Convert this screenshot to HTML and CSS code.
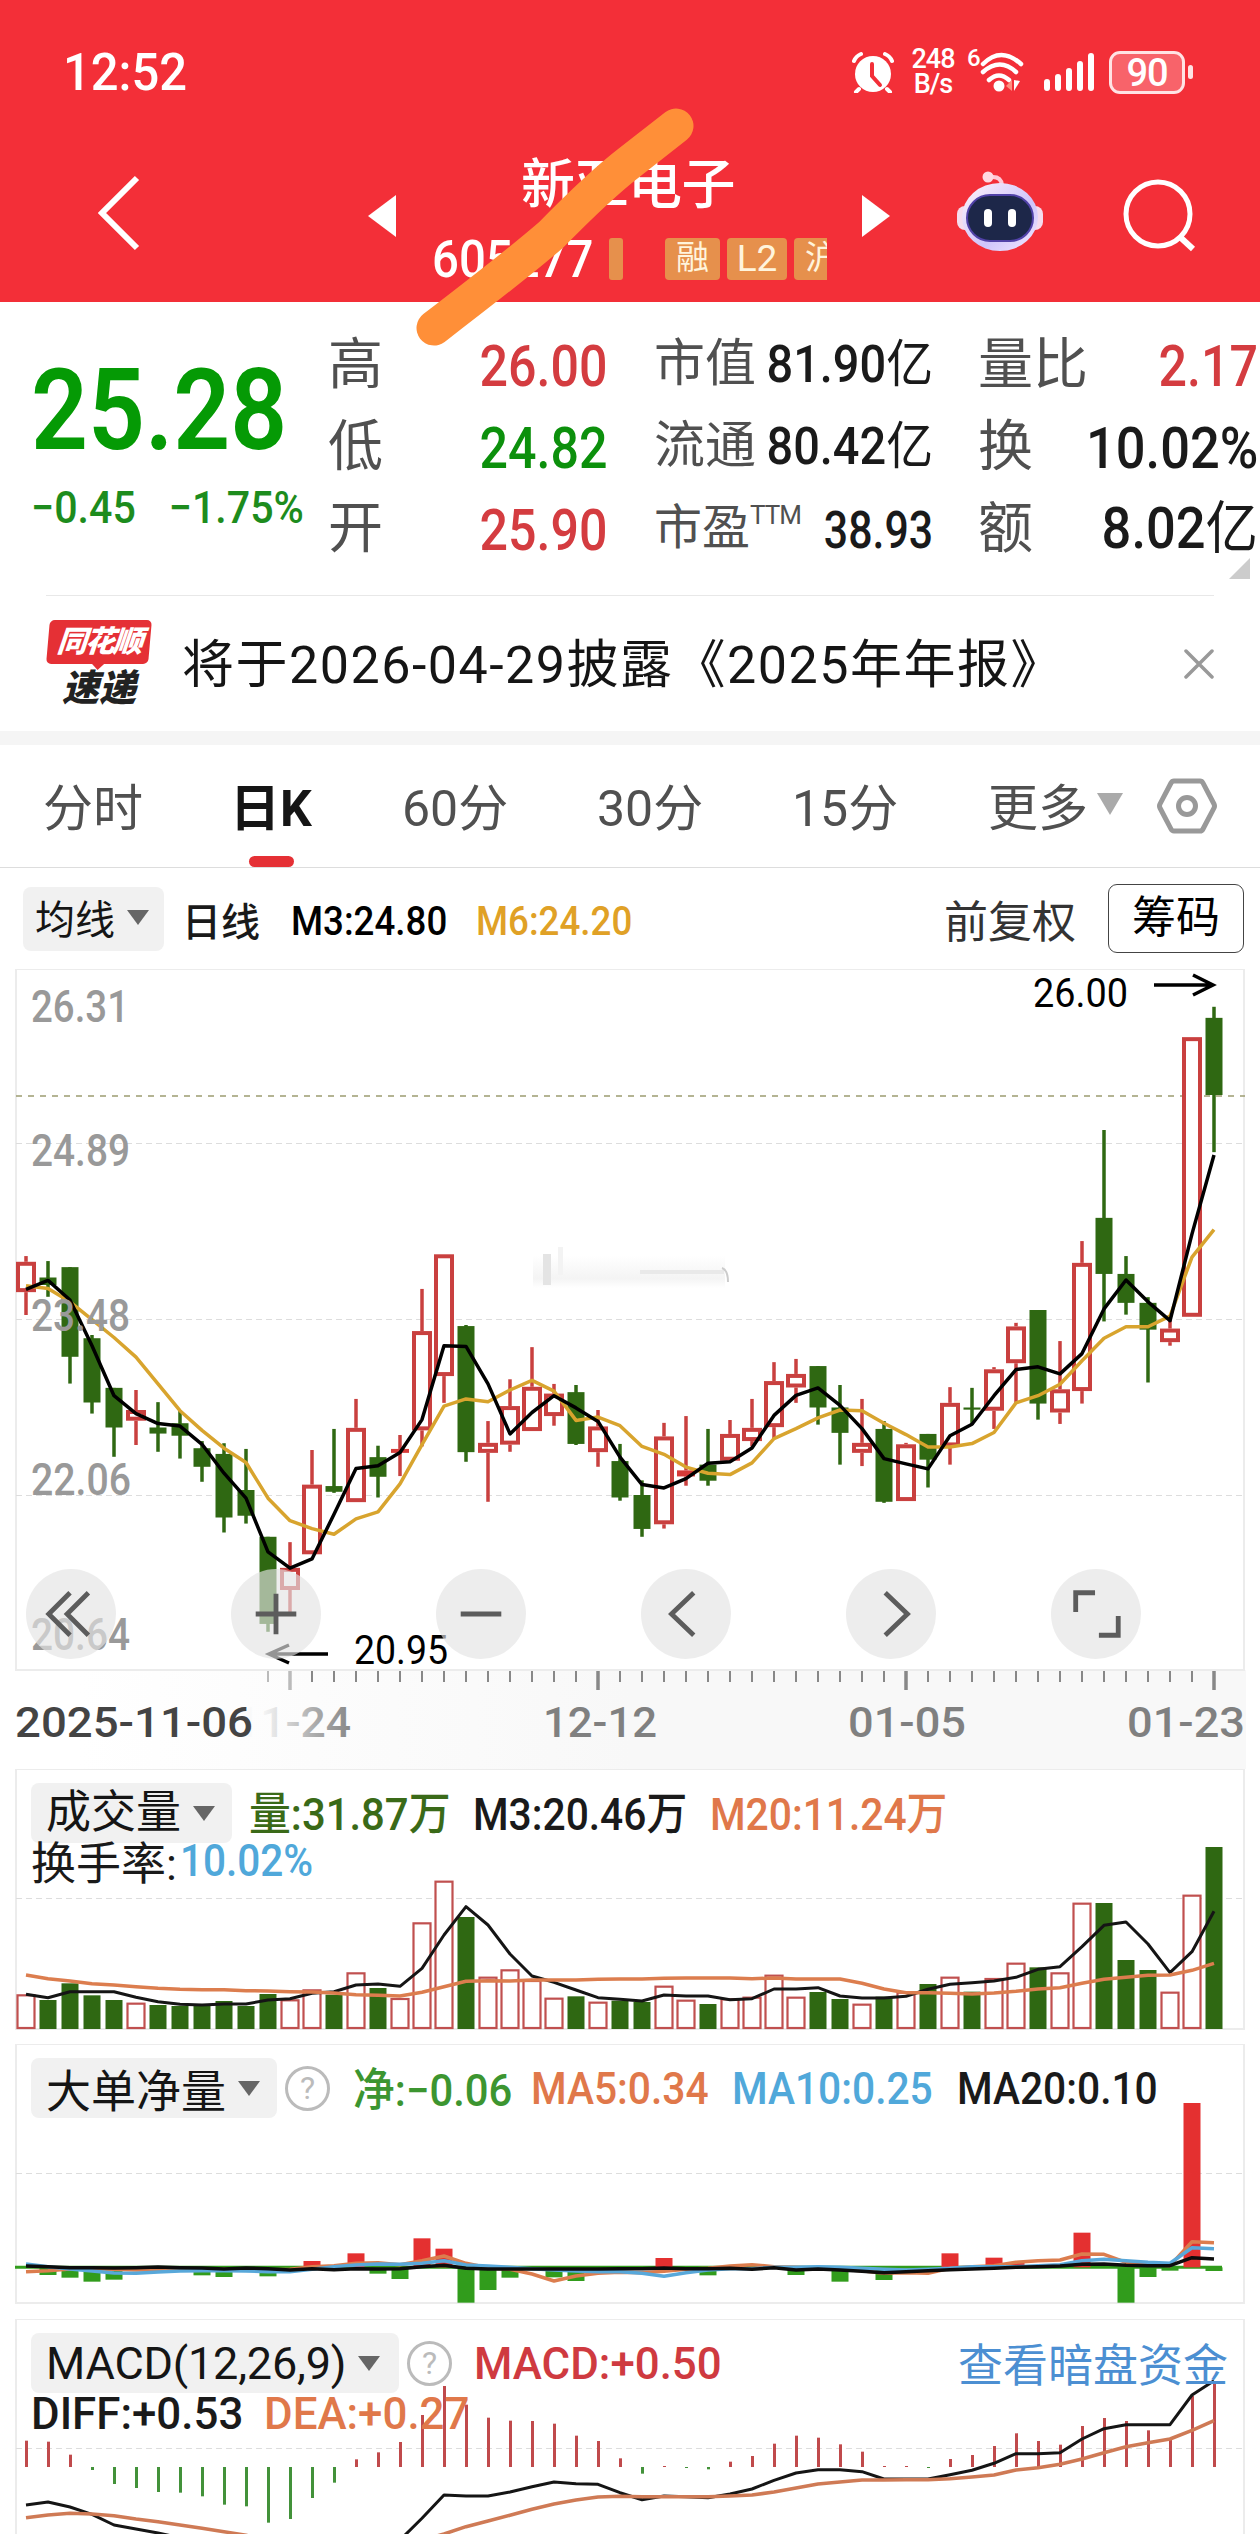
FILE: index.html
```html
<!DOCTYPE html>
<html lang="zh-CN">
<head>
    <meta charset="UTF-8">
    <meta name="viewport" content="width=device-width, initial-scale=1.0">
    <title>新亚电子 605277</title>
    <link rel="stylesheet" href="styles.css">
</head>
<body>
    <header class="header">
        <div class="status-bar">
            <div class="time-box"><span class="time">12:52</span></div>
            <svg class="alarm" width="42" height="42" viewBox="0 0 42 42">
                <circle cx="21" cy="23" r="18" fill="#fff"/>
                <path d="M7 38l-3 3M35 38l3 3M2 10Q4 5 9 3M40 10Q38 5 33 3" stroke="#fff" stroke-width="4" stroke-linecap="round" fill="none"/>
                <path d="M20 13v12l8 9" stroke="#f32f38" stroke-width="4" stroke-linecap="round" fill="none"/>
            </svg>
            <span class="net-speed">248<br>B/s</span>
            <span class="wifi-gen">6</span>
            <svg class="wifi" width="44" height="42" viewBox="0 0 44 42">
                <path d="M3 13Q21 -5 41 13M3 21Q20 6 36 21M9 29Q19 20 29 29" stroke="#fff" stroke-width="4.5" stroke-linecap="round" fill="none"/>
                <circle cx="19" cy="35" r="5.5" fill="#fff"/>
                <path d="M32 29v11l-6-5z" fill="#ff8f80"/>
                <path d="M34 29v11l6-10z" fill="#fff"/>
            </svg>
            <svg class="signal" width="50" height="40" viewBox="0 0 50 40">
                <path d="M3 30v6M14 25v11M25 19v17M36 12v24M47 4v32" stroke="#fff" stroke-width="6" stroke-linecap="round"/>
            </svg>
            <span class="battery">90</span>
            <span class="battery-tip"></span>
        </div>
        <div class="title-bar">
            <svg class="back" width="44" height="78" viewBox="0 0 44 78"><path d="M39 4L4 39l35 35" stroke="#fff" stroke-width="6" fill="none"/></svg>
            <svg class="prev" width="28" height="42" viewBox="0 0 28 42"><path d="M28 0v42L0 21z" fill="#fff"/></svg>
            <div class="stock">
                <div class="stock-name">新亚电子</div>
                <div class="stock-code"><span class="code">605277</span><i class="tag-piece"></i><span class="tag">融</span><span class="tag tag-l2">L2</span><span class="tag tag-cut">沪</span></div>
            </div>
            <svg class="next" width="28" height="42" viewBox="0 0 28 42"><path d="M0 0v42l28-21z" fill="#fff"/></svg>
            <svg class="robot" width="86" height="82" viewBox="0 0 86 82">
                <defs>
                    <linearGradient id="head" x1="0" y1="0" x2="1" y2="1">
                        <stop offset="0" stop-color="#fff4fa"/>
                        <stop offset=".6" stop-color="#cfc4fb"/>
                        <stop offset="1" stop-color="#f3eaff"/>
                    </linearGradient>
                </defs>
                <path d="M45 14Q44 5 34 6" stroke="#ffc9d6" stroke-width="4" fill="none"/>
                <circle cx="31" cy="6" r="5.5" fill="#ffd9e2"/>
                <rect x="0" y="35" width="86" height="24" rx="8" fill="#f5dcee"/>
                <ellipse cx="43" cy="46" rx="38" ry="34" fill="url(#head)"/>
                <rect x="10" y="24" width="66" height="46" rx="23" fill="#1d2749" stroke="#5142a8" stroke-width="2"/>
                <rect x="27" y="38" width="8" height="18" rx="4" fill="#fff"/>
                <rect x="51" y="38" width="8" height="18" rx="4" fill="#fff"/>
            </svg>
            <svg class="search" width="74" height="74" viewBox="0 0 74 74"><circle cx="35" cy="35" r="32" stroke="#fff" stroke-width="5" fill="none"/><path d="M57 58l13 12" stroke="#fff" stroke-width="6"/></svg>
        </div>
        <!-- marker stroke across the stock name -->
        <svg class="marker" width="290" height="250" viewBox="410 100 290 250"><path d="M434 328Q520 262 551 235Q600 185 630 162L676 126" stroke="#ff8f38" stroke-width="35" stroke-linecap="round" stroke-linejoin="round" fill="none"/></svg>
    </header>

    <section class="quote">
        <div class="price">
            <div class="last">25.28</div>
            <div class="change"><span>−0.45</span><span>−1.75%</span></div>
        </div>
        <div class="stats">
            <span class="label">高</span><span class="num up">26.00</span>
            <span class="label mid">市值</span><span class="num mid wide">81.90<b>亿</b></span>
            <span class="label last-col">量比</span><span class="num up">2.17</span>
            <span class="label">低</span><span class="num down">24.82</span>
            <span class="label mid">流通</span><span class="num mid wide">80.42<b>亿</b></span>
            <span class="label last-col">换</span><span class="num percent">10.02%</span>
            <span class="label">开</span><span class="num up">25.90</span>
            <span class="label pe">市盈<sup>TTM</sup></span><span class="num mid">38.93</span>
            <span class="label last-col">额</span><span class="num wide">8.02<b>亿</b></span>
        </div>
        <i class="expand"></i>
    </section>

    <section class="news">
        <div class="news-logo"><span class="logo-top">同花顺</span><span class="logo-bottom">速递</span></div>
        <div class="news-title">将于2026-04-29披露《2025年年报》</div>
        <svg class="close" width="30" height="30" viewBox="0 0 30 30"><path d="M2 2l26 26M28 2L2 28" stroke="#999" stroke-width="3.5" stroke-linecap="round"/></svg>
    </section>

    <nav class="tabs">
        <span class="tab">分时</span>
        <span class="tab active">日K</span>
        <span class="tab">60分</span>
        <span class="tab">30分</span>
        <span class="tab">15分</span>
        <span class="tab">更多<i class="caret light"></i></span>
        <svg class="setting" width="60" height="56" viewBox="0 0 60 56"><path d="M17 3h26q2 0 3 2l11 21q1 2 0 4L46 51q-1 2-3 2H17q-2 0-3-2L3 30q-1-2 0-4L14 5q1-2 3-2z" stroke="#999" stroke-width="5" fill="none"/><circle cx="30" cy="28" r="8.5" stroke="#999" stroke-width="5" fill="none"/></svg>
    </nav>

    <div class="toolbar">
        <span class="select small">均线<i class="caret"></i></span>
        <span class="line-name">日线</span>
        <span class="ma3"><em>M3:24.80</em></span>
        <span class="ma6"><em>M6:24.20</em></span>
        <span class="restore">前复权</span>
        <span class="chip-btn">筹码</span>
    </div>

    <section class="panel kline">
        <svg id="kline" width="1260" height="800" viewBox="0 969 1260 800"></svg>
        <div class="controls">
            <button class="round"><svg viewBox="0 0 60 60"><path d="M29 8L7 30l22 22M48 8L26 30l22 22"/></svg></button>
            <button class="round"><svg viewBox="0 0 60 60"><path d="M30 9v42M9 30h42"/></svg></button>
            <button class="round"><svg viewBox="0 0 60 60"><path d="M9 30h42"/></svg></button>
            <button class="round"><svg viewBox="0 0 60 60"><path d="M38 8L15 30l23 22"/></svg></button>
            <button class="round"><svg viewBox="0 0 60 60"><path d="M24 8l23 22-23 22"/></svg></button>
            <button class="round"><svg viewBox="0 0 60 60"><path d="M9 28V8h20M53 32v20H33"/></svg></button>
        </div>
    </section>

    <section class="panel volume">
        <svg id="volume" width="1260" height="275" viewBox="0 1769 1260 275"></svg>
        <div class="legend">
            <span class="select">成交量<i class="caret"></i></span>
            <span class="vol-now"><em>量:31.87万</em></span>
            <span class="vol-m3"><em>M3:20.46万</em></span>
            <span class="vol-m20"><em>M20:11.24万</em></span>
        </div>
        <div class="legend second"><span class="rate">换手率:</span><span class="turnover"><em>10.02%</em></span></div>
    </section>

    <section class="panel netflow">
        <svg id="netflow" width="1260" height="275" viewBox="0 2044 1260 275"></svg>
        <div class="legend">
            <span class="select">大单净量<i class="caret"></i></span>
            <span class="help">?</span>
            <span class="net-now"><em>净:−0.06</em></span>
            <span class="net-ma5"><em>MA5:0.34</em></span>
            <span class="net-ma10"><em>MA10:0.25</em></span>
            <span class="net-ma20"><em>MA20:0.10</em></span>
        </div>
    </section>

    <section class="panel macd">
        <svg id="macd" width="1260" height="215" viewBox="0 2319 1260 215"></svg>
        <div class="legend">
            <span class="select macd-select">MACD(12,26,9)<i class="caret"></i></span>
            <span class="help">?</span>
            <span class="macd-now"><em>MACD:+0.50</em></span>
            <span class="dark-pool">查看暗盘资金</span>
        </div>
        <div class="legend second"><span class="diff"><em>DIFF:+0.53</em></span><span class="dea"><em>DEA:+0.27</em></span></div>
    </section>

    <script src="charts.js"></script>
</body>
</html>
```
FILE: styles.css
```css
body {
    margin: 0;
    width: 1260px;
    height: 2534px;
    overflow: hidden;
    background: #fff;
    color: #1a1a1a;
    font-family: Roboto, "Noto Sans CJK SC", sans-serif;
}
svg {
    display: block;
    flex: none;
}
span, div {
    white-space: nowrap;
}
i, em {
    font-style: normal;
}

/* narrow numerals */
em {
    display: inline-block;
    transform: scaleX(.905);
    transform-origin: left;
}

/* header */
.header {
    position: relative;
    height: 302px;
    background: #f32f38;
    color: #fff;
}
.status-bar {
    display: flex;
    align-items: center;
    height: 144px;
    padding-left: 63px;
}
.time-box {
    width: 789px;
}
.time {
    display: inline-block;
    font-size: 52px;
    font-weight: 500;
    transform: scaleX(.94);
    transform-origin: left;
}
.net-speed {
    width: 46px;
    margin-left: 16px;
    font-size: 27px;
    line-height: 25px;
    font-weight: 500;
    text-align: center;
    letter-spacing: -1px;
}
.wifi-gen {
    width: 13px;
    margin: -28px 0 0 11px;
    font-size: 24px;
    font-weight: 500;
}
.signal {
    margin-left: 20px;
}
.battery {
    box-sizing: border-box;
    width: 76px;
    height: 43px;
    margin-left: 15px;
    border: 3px solid #ffe3e4;
    border-radius: 11px;
    background: #f8636a;
    font-size: 38px;
    line-height: 38px;
    font-weight: 500;
    text-align: center;
    letter-spacing: -1px;
}
.battery-tip {
    width: 5px;
    height: 14px;
    margin-left: 3px;
    border-radius: 3px;
    background: #ffe3e4;
}
.title-bar {
    display: flex;
    align-items: flex-start;
    height: 158px;
}
.back {
    margin: 30px 0 0 98px;
}
.prev {
    margin: 51px 0 0 226px;
}
.stock {
    width: 466px;
}
.stock-name {
    margin: 9px 0 0 125px;
    font-size: 54px;
    line-height: 66px;
    font-weight: 500;
    letter-spacing: -.5px;
}
.stock-code {
    display: flex;
    align-items: center;
    width: 395px;
    height: 44px;
    margin: 18px 0 0 36px;
    overflow: hidden;
}
.code {
    flex: none;
    width: 177px;
    margin: -8px 0;
    font-size: 52px;
    font-weight: 500;
    transform: scaleX(.91);
    transform-origin: left;
}
.tag-piece {
    flex: none;
    width: 14px;
    height: 42px;
    margin-right: 42px;
    border-radius: 3px;
    background: #e6904c;
}
.tag {
    flex: none;
    width: 55px;
    height: 42px;
    margin-right: 7px;
    border-radius: 4px;
    background: #e6904c;
    color: #fff4dc;
    font-size: 33px;
    line-height: 40px;
    text-align: center;
}
.tag-l2 {
    width: 60px;
    font-size: 37px;
    line-height: 42px;
}
.next {
    margin: 51px 0 0 0;
}
.robot {
    margin: 27px 0 0 67px;
}
.search {
    margin: 35px 0 0 80px;
}
.marker {
    position: absolute;
    left: 410px;
    top: 100px;
    z-index: 2;
}

/* quote */
.quote {
    position: relative;
    display: flex;
    height: 293px;
}
.price {
    width: 329px;
    padding-left: 31px;
    box-sizing: border-box;
    color: #059a05;
}
.last {
    margin-top: 43px;
    font-size: 114px;
    line-height: 130px;
    font-weight: 600;
    transform: scaleX(.875);
    transform-origin: left;
}
.change {
    display: flex;
    gap: 36px;
    margin-top: 6px;
    font-size: 45px;
    line-height: 54px;
    font-weight: 500;
    color: #1d8c1d;
    transform: scaleX(.915);
    transform-origin: left;
}
.stats {
    display: grid;
    grid-template-columns: 120px 159px 167px 159px 165px 160px;
    grid-auto-rows: 82px;
    align-items: center;
    margin: 24px 0 0 -1px;
}
.stats .label {
    padding-bottom: 7px;
    color: #505050;
    font-size: 55px;
    line-height: 74px;
}
.stats .label.mid {
    padding-left: 47px;
    font-size: 51px;
}
.stats .label.pe {
    padding-left: 47px;
    font-size: 48px;
}
.stats .label.last-col {
    padding-left: 45px;
}
.label sup {
    font-size: 26px;
    line-height: 0;
    vertical-align: 20px;
    letter-spacing: -1px;
}
.num {
    justify-self: end;
    font-size: 57px;
    line-height: 74px;
    font-weight: 500;
    transform: scaleX(.88);
    transform-origin: right;
}
.num b {
    font-weight: 400;
}
.num.mid {
    font-size: 51px;
    transform: scaleX(.84);
}
.num.wide, .num.mid.wide, .num.percent {
    transform: scaleX(.92);
}
.num.wide {
    padding-bottom: 5px;
}
.up {
    color: #d43c40;
}
.down {
    color: #0c900c;
}
.expand {
    position: absolute;
    right: 10px;
    bottom: 16px;
    border-left: 21px solid transparent;
    border-bottom: 21px solid #ccc;
}

/* news line */
.news {
    display: flex;
    align-items: center;
    height: 135px;
    margin: 0 46px;
    border-top: 1px solid #e8e8e8;
}
.news-logo {
    display: flex;
    flex-direction: column;
    width: 106px;
    margin-right: 30px;
    text-align: center;
    font-weight: 900;
    font-style: italic;
}
.logo-top {
    position: relative;
    height: 44px;
    margin: 0 2px;
    border-radius: 5px;
    background: #e53035;
    color: #fff;
    font-size: 30px;
    line-height: 43px;
    letter-spacing: -2px;
    transform: skewX(-5deg);
}
.logo-top::after {
    content: "";
    position: absolute;
    left: 45px;
    top: 43px;
    border: 7px solid transparent;
    border-top-color: #e53035;
}
.logo-bottom {
    height: 44px;
    color: #222;
    font-size: 37px;
    line-height: 50px;
}
.news-title {
    flex: 1;
    padding-bottom: 6px;
    font-size: 52px;
    letter-spacing: 1.5px;
    color: #151515;
}

/* tabs */
.tabs {
    display: flex;
    align-items: center;
    height: 122px;
    padding-left: 43px;
    border-top: 14px solid #f5f5f5;
    border-bottom: 1px solid #ddd;
    color: #505050;
    font-size: 50px;
}
.tab {
    position: relative;
    display: flex;
    align-items: center;
    width: 195px;
    padding-bottom: 5px;
}
.tab:first-child {
    width: 187px;
}
.tab:nth-child(2) {
    width: 172px;
}
.tab.active {
    color: #151515;
    font-weight: 700;
}
.tab.active::after {
    content: "";
    position: absolute;
    left: 19px;
    bottom: -22px;
    width: 45px;
    height: 11px;
    border-radius: 6px;
    background: #e53035;
}
.tab:nth-child(5) {
    width: 196px;
}
.tab:nth-child(6) {
    width: 169px;
}
.caret {
    border: 11px solid transparent;
    border-top: 15px solid #666;
    border-bottom: 0;
}
.caret.light {
    margin-left: 9px;
    border-width: 22px 13px 0;
    border-top-color: #aaa;
}

/* moving average toolbar */
.toolbar {
    display: flex;
    align-items: center;
    height: 101px;
    padding: 0 16px 0 23px;
    font-size: 41px;
}
.select {
    display: flex;
    align-items: center;
    gap: 12px;
    box-sizing: border-box;
    height: 60px;
    padding: 0 17px 0 15px;
    border-radius: 8px;
    background: #f1f1f1;
    color: #151515;
}
.select.small {
    height: 64px;
    width: 141px;
    padding: 0 0 3px 12px;
    font-size: 40px;
}
.line-name {
    width: 109px;
    margin-left: 18px;
    font-size: 39px;
    font-weight: 500;
}
.ma3 {
    width: 185px;
    padding-top: 4px;
    color: #000;
    font-weight: 500;
}
.ma6 {
    padding-top: 4px;
    color: #e0a126;
    font-weight: 500;
}
.ma3 em, .ma6 em {
    transform: scaleX(.895);
}
.restore {
    margin-left: auto;
    font-size: 44px;
    color: #333;
}
.chip-btn {
    box-sizing: border-box;
    width: 136px;
    height: 69px;
    margin-left: 32px;
    border: 1px solid #444;
    border-radius: 9px;
    font-size: 44px;
    line-height: 67px;
    text-align: center;
    color: #000;
}

/* chart panels */
.panel {
    position: relative;
}
.controls {
    position: absolute;
    left: 26px;
    top: 600px;
    display: flex;
    gap: 115px;
}
.round {
    display: flex;
    align-items: center;
    justify-content: center;
    width: 90px;
    height: 90px;
    padding: 0;
    border: 0;
    border-radius: 50%;
    background: rgba(227, 227, 227, .65);
}
.round svg {
    width: 58px;
    height: 58px;
    fill: none;
    stroke: #5c5c5c;
    stroke-width: 5;
}
.legend {
    position: absolute;
    left: 31px;
    top: 14px;
    right: 32px;
    display: flex;
    align-items: center;
    height: 60px;
    font-size: 45px;
}
.legend em {
    font-weight: 500;
}
.legend.second {
    top: 72px;
    height: 44px;
}
.volume .legend > span:not(.select) {
    padding-bottom: 6px;
}
.volume .select {
    line-height: 56px;
}
.volume .legend .rate {
    width: 149px;
    padding-bottom: 3px;
}
.volume .legend .turnover {
    padding-bottom: 0;
}
.turnover em {
    transform: scaleX(.9);
}
.vol-now {
    width: 224px;
    margin-left: 17px;
    color: #3a6a18;
}
.vol-now em, .net-now em {
    transform: scaleX(.93);
}
.vol-m3 {
    width: 237px;
}
.vol-m20, .net-ma5, .dea {
    color: #e0784a;
}
.turnover, .net-ma10 {
    color: #50a8da;
}
.help {
    box-sizing: border-box;
    width: 45px;
    height: 45px;
    margin-left: 8px;
    border: 3px solid #bbb;
    border-radius: 50%;
    color: #bbb;
    font-size: 32px;
    line-height: 39px;
    text-align: center;
}
.net-now {
    width: 178px;
    margin-left: 23px;
    padding-bottom: 4px;
    color: #3c9530;
}
.net-ma5 {
    width: 201px;
}
.net-ma10 {
    width: 225px;
}
.macd-select {
    width: 368px;
    letter-spacing: -.2px;
}
.macd em {
    transform: scaleX(.975);
}
.macd-now {
    margin-left: 22px;
    color: #cf3a40;
}
.dark-pool {
    margin-left: auto;
    padding-bottom: 2px;
    color: #4c8fd2;
}
.diff {
    width: 233px;
}
```
FILE: charts.js
```js
// y values are stored in fractions of a pixel, measured from each panel's origin
const X0 = 26, STEP = 22, RED = '#c9403f', GREEN = '#2f6812';
const x = i => X0 + i * STEP;
const scale = (origin, k) => v => origin + v / k;

function line(x1, y1, x2, y2, color, width, extra) {
    return `<line x1="${x1}" y1="${y1}" x2="${x2}" y2="${y2}" stroke="${color}" stroke-width="${width}" ${extra || ''}/>`;
}
function rect(left, top, w, h, fill, stroke, sw) {
    return `<rect x="${left}" y="${top}" width="${w}" height="${h}" fill="${fill}" stroke="${stroke || 'none'}" stroke-width="${sw || 0}"/>`;
}
function poly(values, y, color, width) {
    const pts = values.map((v, i) => `${x(i)},${y(v).toFixed(1)}`).join(' ');
    return `<polyline points="${pts}" fill="none" stroke="${color}" stroke-width="${width}" stroke-linejoin="round"/>`;
}
function text(left, base, w, size, color, str, weight) {
    return `<text x="${left}" y="${base}" font-size="${size}" fill="${color}" font-weight="${weight || 400}" textLength="${w}" lengthAdjust="spacingAndGlyphs">${str}</text>`;
}
function frame(top, h) {
    return rect(16, top + 1, 1228, h, 'none', '#ececec', 2);
}
function dash(y) {
    return line(16, y, 1244, y, '#ddd', 1.2, 'stroke-dasharray="6 4"');
}

// [color, high, body top, body bottom, low]
const candles = [
    ['r',157,173,258,322],['g',171,217,238,271],['g',188,188,439,514],['g',378,387,567,598],['g',526,526,637,719],
    ['r',532,588,618,686],['g',566,637,654,705],['g',590,625,660,724],['g',675,695,747,789],['g',681,711,889,931],
    ['g',697,812,884,906],['g',943,943,1187,1209],['r',958,1030,1092,1165],['r',700,797,992,992],['g',641,801,817,820],
    ['r',557,638,846,846],['g',688,720,775,833],['r',658,697,708,773],['r',249,367,645,690],['r',152,152,493,568],
    ['g',350,353,706,733],['r',619,680,708,845],['r',502,577,685,705],['r',412,523,647,647],['r',515,542,605,632],
    ['g',518,538,683,686],['r',588,634,706,747],['g',683,731,833,842],['g',785,826,921,943],['r',624,662,908,920],
    ['r',605,757,774,800],['g',641,741,786,800],['r',616,655,730,730],['r',557,638,675,690],['r',454,507,636,668],
    ['r',445,487,525,568],['g',465,465,581,629],['g',518,581,652,741],['r',557,680,708,745],['g',619,641,845,848],
    ['r',680,684,843,843],['g',655,655,727,805],['r',524,568,690,741],['g',526,581,587,630],['r',468,474,590,641],
    ['r',344,354,457,570],['g',308,308,570,615],['r',395,530,595,627],['r',115,176,535,570],['g',-196,50,207,340],
    ['g',157,207,288,321],['g',272,288,363,511],['r',330,360,398,408],['r',-456,-456,327,327],['g',-541,-510,-294,-134]
];
const m3 = [250,225,280,408,548,598,626,633,684,765,835,985,1031,1005,880,752,744,707,615,408,410,515,655,595,548,582,620,720,797,806,780,737,733,694,603,547,526,575,640,724,739,753,660,628,548,475,467,487,430,305,224,285,338,95,-126];
const m6 = [240,248,285,335,385,440,515,590,645,695,735,835,898,920,936,893,873,795,685,577,557,565,532,505,535,617,608,632,690,712,748,765,769,736,668,640,610,588,590,625,657,692,692,682,651,568,548,516,450,387,355,355,325,160,83];

function drawKline() {
    const y = scale(1200, 2.8);
    let s = `<defs>
        <linearGradient id="axis" x1="0" y1="0" x2="1" y2="0"><stop offset=".05" stop-color="#fff"/><stop offset=".5" stop-color="#f8f8f8"/></linearGradient>
        <linearGradient id="fade" x1="0" y1="0" x2="1" y2="0"><stop offset="0" stop-color="#fff"/><stop offset=".25" stop-color="#f4f4f4"/><stop offset=".7" stop-color="#aaa"/><stop offset="1" stop-color="#888"/></linearGradient>
        <linearGradient id="smudge" x1="0" y1="0" x2="0" y2="1"><stop offset="0" stop-color="#fff"/><stop offset=".7" stop-color="#f4f4f4"/><stop offset="1" stop-color="#fff"/></linearGradient>
    </defs>`;
    s += rect(16, 1670, 1230, 99, 'url(#axis)');
    s += frame(968, 701);
    s += dash(1143.5) + dash(1319.5) + dash(1495.5);
    s += rect(533, 1256, 192, 32, 'url(#smudge)') + rect(543, 1254, 8, 31, '#e4e4e4') + rect(558, 1247, 5, 28, '#f3f3f3') + line(640, 1272, 724, 1272, '#e9e9e9', 4) + `<path d="M722 1268q6 2 6 14" fill="none" stroke="#ccc" stroke-width="2"/>`;
    s += line(16, 1096, 1245, 1096, '#9c9c70', 1.6, 'stroke-dasharray="6 6"');
    candles.forEach(([c, high, top, bottom, low], i) => {
        const color = c === 'r' ? RED : GREEN;
        const cx = x(i), t = y(top), h = y(bottom) - t;
        if (c === 'r') {
            if (high < top) s += line(cx, y(high), cx, t, color, 3.5);
            if (low > bottom) s += line(cx, t + h, cx, y(low), color, 3.5);
            s += h > 7 ? rect(cx - 8, t + 2, 16, h - 4, '#fff', color, 4) : rect(cx - 9, t, 18, h, '#d63a38');
        } else {
            s += line(cx, y(high), cx, y(low), color, 3.5) + rect(cx - 8.5, t, 17, h, color);
        }
    });
    s += poly(m6, y, '#d8a42e', 3.5) + poly(m3, y, '#000', 3.5);
    s += [['26.31',1022,98],['24.89',1166,99],['23.48',1331,99],['22.06',1495,100],['20.64',1650,99]]
        .map(([t, base, w]) => text(31, base, w, 45, '#999', t, 500)).join('');
    s += text(1033, 1007, 95, 40, '#000', '26.00') + text(354, 1664, 94, 40, '#000', '20.95');
    s += `<path d="M1154 985h58M1193 975l20 10-20 10M328 1654h-58M289 1645l-20 9 20 9" fill="none" stroke="#000" stroke-width="3.5"/>`;
    for (let i = 11; i < 55; i++) {
        const major = (i - 12) % 14 === 0;
        s += line(x(i), 1671, x(i), major ? 1690 : 1682, i < 13 ? '#bbb' : '#888', major ? 3.5 : 2);
    }
    s += text(235, 1737, 116, 43, 'url(#fade)', '11-24', 500);
    s += text(15, 1737, 238, 43, '#444', '2025-11-06', 500);
    s += text(543, 1737, 114, 43, '#808080', '12-12', 500) + text(848, 1737, 118, 43, '#808080', '01-05', 500) + text(1127, 1737, 118, 43, '#808080', '01-23', 500);
    document.getElementById('kline').innerHTML = s;
}

const volumes = [733,750,700,736,750,758,765,768,768,753,768,732,748,718,734,667,714,744,517,392,501,680,658,690,743,739,755,752,756,707,749,762,745,740,674,740,726,747,761,740,725,702,680,725,684,638,652,667,458,459,630,660,725,434,291];
const volM3 = [733,743,725,725,725,742,755,763,765,762,762,750,746,730,725,705,702,709,655,555,470,525,612,678,697,720,743,748,753,735,738,738,749,746,717,717,713,738,744,744,739,718,703,698,693,682,658,650,590,526,516,582,668,605,484];
const volM20 = [675,686,693,701,705,710,715,718,719,719,722,723,725,726,729,734,736,738,727,710,694,692,693,690,690,690,688,687,687,685,684,684,684,686,684,687,687,687,700,717,728,728,730,732,729,724,717,713,700,688,682,676,675,661,640];

function drawVolume() {
    const y = scale(1750, 3);
    let s = frame(1768, 260) + dash(1898.5);
    volumes.forEach((v, i) => {
        const t = y(v), h = 2029 - t;
        s += candles[i][0] === 'r' ? rect(x(i) - 8.5, t + 1, 17, h - 2, '#fff', '#c0504f', 2.2) : rect(x(i) - 8.5, t, 17, h, GREEN);
    });
    s += poly(volM3, y, '#151515', 3) + poly(volM20, y, '#dc7d4e', 3.5);
    document.getElementById('volume').innerHTML = s;
}

// index -> end of the bar, all bars start on the zero line
const net = {1:525,2:533,3:545,4:539,8:526,9:531,11:529,13:483,15:460,16:521,17:537,18:415,19:446,20:608,21:570,22:533,24:532,25:543,29:474,31:526,35:525,37:545,39:540,42:460,44:473,45:487,48:398,50:608,51:531,52:512,53:9,54:513};
const netMa5 = [515,512,507,507,508,510,510,508,507,508,510,510,508,500,497,490,488,494,482,468,490,503,508,522,543,528,520,517,518,514,508,505,498,494,500,502,505,508,512,520,518,520,505,500,497,487,482,480,462,463,487,492,497,425,428];
const netMa10 = [492,500,507,513,519,520,516,513,512,512,513,515,515,508,500,495,492,493,490,482,495,498,502,506,510,513,515,515,520,529,518,510,506,506,502,502,500,502,505,508,510,508,505,500,500,500,497,494,482,478,482,487,490,443,446];
const netMa20 = [498,500,503,503,504,503,501,503,504,507,504,506,510,506,509,506,507,506,500,496,505,507,507,507,507,507,507,506,506,504,506,506,505,508,503,510,507,510,514,518,515,512,509,507,505,502,500,498,493,492,496,497,497,473,477];

function drawNetflow() {
    const y = scale(2100, 3);
    let s = frame(2043, 259) + dash(2173.5);
    s += line(15, y(502), x(54) + 8, y(502), '#319c1c', 3);
    for (const i in net) {
        const end = y(net[i]), zero = y(502);
        s += end < zero ? rect(x(+i) - 8.5, end, 17, zero - end, '#e43030') : rect(x(+i) - 8.5, zero, 17, end - zero, '#319c1c');
    }
    s += poly(netMa5, y, '#dc7d4e', 3.5) + poly(netMa10, y, '#58a8da', 3.5) + poly(netMa20, y, '#0c0c0c', 3.5);
    document.getElementById('netflow').innerHTML = s;
}

const macd = [1022,1025,1064,1110,1152,1164,1176,1178,1189,1214,1219,1268,1257,1194,1148,1078,1057,1026,945,858,914,953,962,963,971,1007,1023,1075,1121,1098,1104,1108,1085,1068,1031,1007,1013,1033,1055,1098,1098,1104,1077,1065,1038,1000,1023,1034,978,954,963,991,1018,888,847];
const diff = [1215,1206,1221,1243,1275,1287,1299,1313,1330,1350,1370,1390,1400,1400,1390,1370,1345,1320,1255,1185,1188,1188,1176,1160,1146,1151,1153,1178,1199,1188,1190,1193,1182,1167,1141,1119,1109,1109,1115,1137,1137,1137,1124,1111,1090,1061,1061,1058,1017,986,974,974,974,885,842];
const dea = [1253,1245,1240,1242,1247,1257,1265,1275,1285,1295,1306,1320,1335,1345,1350,1350,1345,1335,1320,1302,1280,1263,1246,1228,1212,1200,1191,1189,1190,1190,1190,1190,1188,1185,1176,1164,1152,1146,1140,1140,1139,1139,1136,1131,1125,1110,1103,1093,1077,1058,1040,1028,1017,991,962];

function drawMacd() {
    const y = scale(2100, 3);
    let s = frame(2318, 260) + dash(2448.5);
    macd.forEach((v, i) => {
        s += line(x(i) + .5, y(1101), x(i) + .5, y(v), v < 1101 ? '#c04a4c' : '#43923a', 3);
    });
    s += poly(diff, y, '#151515', 3) + poly(dea, y, '#cf7a55', 3.5);
    document.getElementById('macd').innerHTML = s;
}

drawKline();
drawVolume();
drawNetflow();
drawMacd();
```
